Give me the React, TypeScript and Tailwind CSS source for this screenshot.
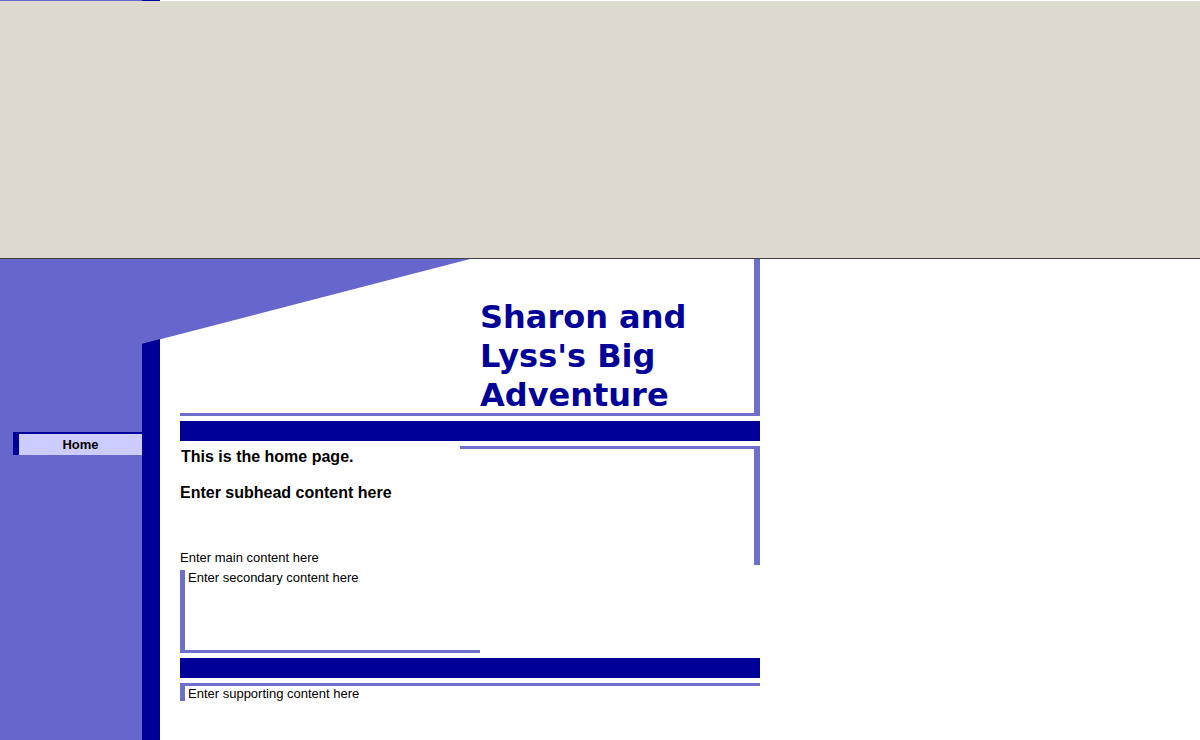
import React from "react";

const Slant = () => (
  <svg
    className="absolute top-0 left-0 pointer-events-none"
    width="470"
    height="100"
    viewBox="0 0 470 100"
  >
    <polygon points="0,0 470,0 142,85 0,85" fill="#6666cc" />
    <polygon points="142,85 160,80.3 160,100 142,100" fill="#000099" />
  </svg>
);

export default function App() {
  return (
    <div className="min-h-[740px] bg-white font-['Liberation_Sans',Arial,sans-serif] text-black">
      {/* top strip */}
      <div className="flex h-px">
        <div className="w-[142px] bg-[#6666cc]" />
        <div className="w-[18px] bg-[#000099]" />
      </div>
      <div className="h-[258px] bg-[#dedacf] border-b border-[#404040]" />

      <div className="relative flex min-h-[481px]">
        {/* sidebar */}
        <div className="w-[142px] bg-[#6666cc] pt-[173px] pl-[13px]">
          <div className="h-[23px] bg-[#ccccff] border-t-2 border-l-[6px] border-[#000099] flex items-center justify-center text-[13px] font-bold leading-[15px]">
            Home
          </div>
        </div>
        <div className="w-[18px] bg-[#000099]" />

        {/* content */}
        <div className="w-[600px] pl-[20px]">
          <div className="h-[157px] pt-[39px] border-b-[3px] border-r-[6px] border-[#6e6ecc]">
            <h1 className="ml-[300px] text-[32px] leading-[39px] font-bold text-[#000099] font-['DejaVu_Sans',Verdana,sans-serif]">
              Sharon and
              <br />
              Lyss's Big
              <br />
              Adventure
            </h1>
          </div>

          <div className="mt-[5px] h-[20px] bg-[#000099]" />

          <div className="float-right mt-[5px] w-[300px] h-[119px] border-t-[3px] border-r-[6px] border-[#6e6ecc]" />
          <h2 className="pt-[7px] pl-px text-[16px] leading-[18px] font-bold">
            This is the home page.
          </h2>
          <h3 className="mt-[18px] text-[16px] leading-[18px] font-bold">
            Enter subhead content here
          </h3>
          <p className="mt-[48px] text-[13px] leading-[15px]">Enter main content here</p>

          <div className="clear-both mt-[5px] w-[300px] h-[83px] border-l-[5px] border-b-[3px] border-[#6e6ecc] pl-[3px] text-[13px] leading-[15px]">
            Enter secondary content here
          </div>

          <div className="mt-[5px] h-[20px] bg-[#000099]" />

          <div className="mt-[5px] border-t-[3px] border-[#6e6ecc]">
            <div className="border-l-[5px] border-[#6e6ecc] pl-[3px] text-[13px] leading-[15px]">
              Enter supporting content here
            </div>
          </div>
        </div>

        <Slant />
      </div>
    </div>
  );
}
